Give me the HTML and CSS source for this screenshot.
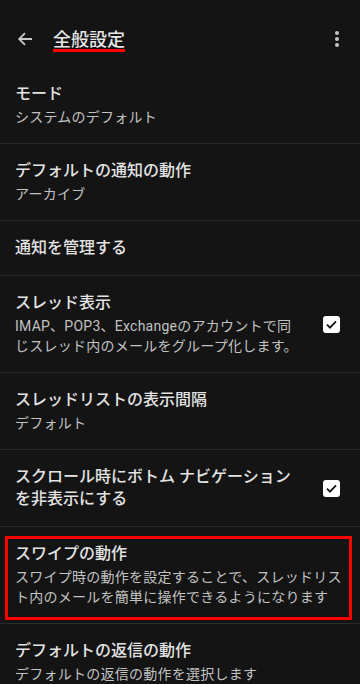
FILE: index.html
```html
<!DOCTYPE html>
<html lang="ja">
<head>
<meta charset="utf-8">
<title>全般設定</title>
<link rel="stylesheet" href="styles.css">
</head>
<body>
<div class="screen">
  <header class="appbar">
    <svg class="back" width="16" height="16" viewBox="0 0 16 16"><path d="M15 8H2.5M8 2.2L2.2 8 8 13.8" fill="none" stroke="#c9c9c9" stroke-width="1.8"/></svg>
    <h1 class="title">全般設定</h1>
    <svg class="more" width="4" height="16" viewBox="0 0 4 16"><circle cx="2" cy="2" r="2" fill="#c4c4c4"/><circle cx="2" cy="8" r="2" fill="#c4c4c4"/><circle cx="2" cy="14" r="2" fill="#c4c4c4"/></svg>
  </header>
  <ul class="list">
    <li class="item"><div class="text"><div class="label">モード</div><div class="desc">システムのデフォルト</div></div></li>
    <li class="item"><div class="text"><div class="label">デフォルトの通知の動作</div><div class="desc">アーカイブ</div></div></li>
    <li class="item"><div class="text"><div class="label">通知を管理する</div></div></li>
    <li class="item with-check"><div class="text"><div class="label">スレッド表示</div><div class="desc">IMAP、POP3、Exchangeのアカウントで同じスレッド内のメールをグループ化します。</div></div><span class="check"><svg width="11" height="9" viewBox="0 0 11 9"><path d="M1 4.6l3 3L10 1.4" fill="none" stroke="#111" stroke-width="1.8"/></svg></span></li>
    <li class="item"><div class="text"><div class="label">スレッドリストの表示間隔</div><div class="desc">デフォルト</div></div></li>
    <li class="item with-check"><div class="text"><div class="label">スクロール時にボトム ナビゲーションを非表示にする</div></div><span class="check"><svg width="11" height="9" viewBox="0 0 11 9"><path d="M1 4.6l3 3L10 1.4" fill="none" stroke="#111" stroke-width="1.8"/></svg></span></li>
    <li class="item highlighted"><div class="text"><div class="label">スワイプの動作</div><div class="desc">スワイプ時の動作を設定することで、スレッドリスト内のメールを簡単に操作できるようになります</div></div></li>
    <li class="item"><div class="text"><div class="label">デフォルトの返信の動作</div><div class="desc">デフォルトの返信の動作を選択します</div></div></li>
  </ul>
</div>
</body>
</html>
```
FILE: styles.css
```css
html, body {
  margin: 0;
  padding: 0;
  background: #141414;
}
.screen {
  width: 360px;
  height: 684px;
  overflow: hidden;
  background: #141414;
  font-family: Roboto, "Noto Sans CJK JP", sans-serif;
  color: #e3e3e3;
}
.appbar {
  height: 67px;
  box-sizing: border-box;
  display: flex;
  align-items: flex-start;
  position: relative;
}
.back {
  margin: 31px 0 0 17px;
  flex: none;
}
.title {
  margin: 30px 0 0 20px;
  font-size: 18px;
  line-height: 19px;
  font-weight: 500;
  color: #e6e6e6;
  border-bottom: 3px solid #ff0000;
}
.more {
  margin: 31px 0 0 auto;
  margin-right: 21px;
  flex: none;
}
.list {
  list-style: none;
  margin: 0;
  padding: 0;
}
.item {
  position: relative;
  display: flex;
  align-items: center;
  padding: 16px 15px;
  border-bottom: 1px solid #2b2b2b;
}
.item:first-child {
  border-top: none;
}
.text {
  flex: 1;
  min-width: 0;
}
.label {
  font-size: 16px;
  line-height: 22px;
  font-weight: 500;
  color: #e3e3e3;
}
.desc {
  margin-top: 2px;
  font-size: 14px;
  line-height: 20px;
  letter-spacing: 0.25px;
  color: #c2c2c2;
}
.with-check {
  padding-right: 20px;
}
.with-check .text {
  margin-right: 25px;
}
.check {
  flex: none;
  width: 17px;
  height: 17px;
  border-radius: 3px;
  background: #ffffff;
  display: flex;
  align-items: center;
  justify-content: center;
}
.highlighted::after {
  content: "";
  position: absolute;
  top: 9px;
  left: 5px;
  right: 8px;
  bottom: 3px;
  border: 3px solid #ff0000;
  pointer-events: none;
}
```
